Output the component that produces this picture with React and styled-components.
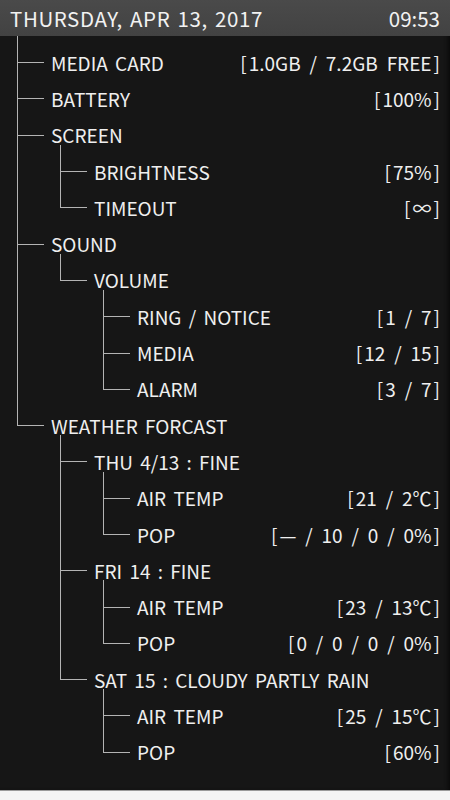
import React from "react";
import styled, { createGlobalStyle } from "styled-components";

const GlobalStyle = createGlobalStyle`
  html, body {
    margin: 0;
    padding: 0;
    background: #f4f4f4;
  }
  body {
    font-family: "Noto Sans CJK JP", "Noto Sans", sans-serif;
    -webkit-font-smoothing: antialiased;
  }
`;

const ROW = 36.3;
const LINE = "#b4b4b4";

const tree = [
  { label: "MEDIA CARD", value: "1.0GB / 7.2GB FREE" },
  { label: "BATTERY", value: "100%" },
  {
    label: "SCREEN",
    children: [
      { label: "BRIGHTNESS", value: "75%" },
      { label: "TIMEOUT", value: "∞" },
    ],
  },
  {
    label: "SOUND",
    children: [
      {
        label: "VOLUME",
        children: [
          { label: "RING / NOTICE", value: "1 / 7" },
          { label: "MEDIA", value: "12 / 15" },
          { label: "ALARM", value: "3 / 7" },
        ],
      },
    ],
  },
  {
    label: "WEATHER FORCAST",
    children: [
      {
        label: "THU 4/13 : FINE",
        children: [
          { label: "AIR TEMP", value: "21 / 2℃" },
          { label: "POP", value: "\u2014 / 10 / 0 / 0%" },
        ],
      },
      {
        label: "FRI 14 : FINE",
        children: [
          { label: "AIR TEMP", value: "23 / 13℃" },
          { label: "POP", value: "0 / 0 / 0 / 0%" },
        ],
      },
      {
        label: "SAT 15 : CLOUDY PARTLY RAIN",
        children: [
          { label: "AIR TEMP", value: "25 / 15℃" },
          { label: "POP", value: "60%" },
        ],
      },
    ],
  },
];

const Screen = styled.div`
  width: 450px;
  height: 790px;
  background: #161616;
  box-shadow: inset -4px 0 4px -2px #0a0a0a;
  border-bottom: 1px solid #9a9a9a;
  display: flex;
  flex-direction: column;
  overflow: hidden;
`;

const StatusBar = styled.header`
  height: 36px;
  flex: none;
  background: linear-gradient(#4a4a4a, #424242);
  color: #f2f2f2;
  font-size: 20.5px;
  display: flex;
  align-items: center;
  justify-content: space-between;
  padding: 0 10px;
`;

const DateText = styled.span`
  letter-spacing: 0.6px;
  word-spacing: 2px;
`;

const Content = styled.div`
  padding: 8px 10px 0 17px;
`;

const Branch = styled.ul`
  list-style: none;
  margin: 0 0 0 ${(p) => p.$offset}px;
  padding: 0;
`;

const Item = styled.li`
  position: relative;
  padding-left: 34px;

  &::before {
    content: "";
    position: absolute;
    left: 0;
    top: -${(p) => p.$lead}px;
    width: 26px;
    height: ${(p) => ROW / 2 + p.$lead}px;
    border-left: 1px solid ${LINE};
    border-bottom: 1px solid ${LINE};
  }

  &:not(:last-child)::after {
    content: "";
    position: absolute;
    left: 0;
    top: ${ROW / 2}px;
    bottom: 0;
    border-left: 1px solid ${LINE};
  }
`;

const Row = styled.div`
  height: ${ROW}px;
  display: flex;
  align-items: center;
  justify-content: space-between;
  color: #efefef;
  font-size: 19px;
  white-space: nowrap;
  word-spacing: 3px;
`;

const Value = styled.span`
  word-spacing: 4.6px;
`;

const Bracket = styled.span`
  padding: ${(p) => (p.$open ? "0 2px 0 0" : "0 0 0 2px")};
`;

function Node({ node, lead }) {
  return (
    <Item $lead={lead}>
      <Row>
        <span>{node.label}</span>
        {node.value && (
          <Value>
            <Bracket $open>[</Bracket>
            {node.value}
            <Bracket>]</Bracket>
          </Value>
        )}
      </Row>
      {node.children && <Tree nodes={node.children} offset={9} lead={8} />}
    </Item>
  );
}

function Tree({ nodes, offset, lead }) {
  return (
    <Branch $offset={offset}>
      {nodes.map((n, i) => (
        <Node key={i} node={n} lead={lead} />
      ))}
    </Branch>
  );
}

export default function App() {
  return (
    <>
      <GlobalStyle />
      <Screen>
        <StatusBar>
          <DateText>THURSDAY, APR 13, 2017</DateText>
          <span>09:53</span>
        </StatusBar>
        <Content>
          <Tree nodes={tree} offset={0} lead={8} />
        </Content>
      </Screen>
    </>
  );
}
